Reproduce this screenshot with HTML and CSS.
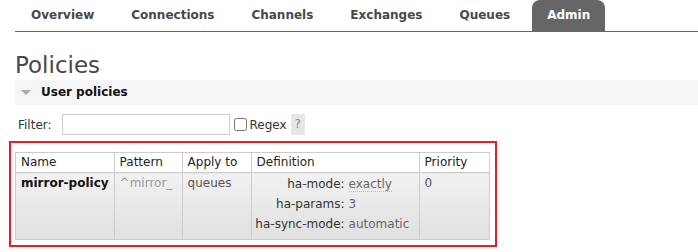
FILE: index.html
```html
<!DOCTYPE html>
<html lang="en">
<head>
    <meta charset="UTF-8">
    <title>Policies</title>
    <link rel="stylesheet" href="styles.css">
</head>
<body>
    <div class="page">
        <ul class="tabs">
            <li><a href="#">Overview</a></li>
            <li><a href="#">Connections</a></li>
            <li><a href="#">Channels</a></li>
            <li><a href="#">Exchanges</a></li>
            <li><a href="#">Queues</a></li>
            <li class="selected"><a href="#">Admin</a></li>
        </ul>

        <h1>Policies</h1>

        <div class="section">
            <h2><span class="arrow"></span>User policies</h2>
            <div class="filter">
                <label for="filter">Filter:</label>
                <input type="text" id="filter" class="filter-input">
                <input type="checkbox" id="regex" class="filter-check">
                <label for="regex">Regex</label>
                <span class="help">?</span>
            </div>
            <div class="highlight">
                <table class="list">
                    <thead>
                        <tr>
                            <th class="c-name">Name</th>
                            <th class="c-pattern">Pattern</th>
                            <th class="c-apply">Apply to</th>
                            <th class="c-def">Definition</th>
                            <th class="c-prio">Priority</th>
                        </tr>
                    </thead>
                    <tbody>
                        <tr>
                            <td class="name">mirror-policy</td>
                            <td class="pattern">^mirror_</td>
                            <td>queues</td>
                            <td class="definition">
                                <table class="facts">
                                    <tr><th>ha-mode:</th><td><abbr>exactly</abbr></td></tr>
                                    <tr><th>ha-params:</th><td>3</td></tr>
                                    <tr><th>ha-sync-mode:</th><td>automatic</td></tr>
                                </table>
                            </td>
                            <td>0</td>
                        </tr>
                    </tbody>
                </table>
            </div>
        </div>
    </div>
</body>
</html>
```

FILE: styles.css
```css
body {
    margin: 0;
    font-family: Verdana, "DejaVu Sans", sans-serif;
    font-size: 12px;
    color: #333;
    background-color: white;
}
.page {
    padding: 0 0 0 15px;
}
.tabs {
    list-style: none;
    margin: 0;
    padding: 0 0 0 1px;
    display: flex;
    border-bottom: 1px solid #666;
    height: 31px;
    align-items: stretch;
}
.tabs li {
    margin-right: 7px;
}
.tabs a {
    display: block;
    padding: 0 15px;
    line-height: 31px;
    color: #484848;
    font-weight: bold;
    text-decoration: none;
    border-radius: 8px 8px 0 0;
}
.tabs .selected a {
    background-color: #666;
    color: white;
}
h1 {
    margin: 0;
    padding-top: 19px;
    font-size: 23px;
    font-weight: normal;
    line-height: 28px;
    color: #484848;
}
h2 {
    margin: 1px 0 0 0;
    height: 25px;
    line-height: 25px;
    background-color: #f5f5f5;
    font-size: 12px;
    font-weight: bold;
    color: #111;
    display: flex;
    align-items: center;
}
.arrow {
    width: 0;
    height: 0;
    margin: 0 10px 0 6px;
    border-left: 5px solid transparent;
    border-right: 5px solid transparent;
    border-top: 5px solid #aaa;
}
.filter {
    display: flex;
    align-items: center;
    margin-top: 9px;
    height: 21px;
    padding-left: 3px;
}
.filter-input {
    width: 162px;
    height: 15px;
    margin: 0 4px 0 10px;
    padding: 2px;
    border: 1px solid #ccc;
    font-family: inherit;
    font-size: 12px;
}
.filter-check {
    width: 13px;
    height: 13px;
    margin: 0 3px 0 0;
}
.help {
    margin-left: 4px;
    width: 14px;
    height: 21px;
    line-height: 21px;
    text-align: center;
    background-color: #e6e6e6;
    color: #888;
}
.highlight {
    display: inline-block;
    margin: 6px 0 0 -6px;
    padding: 9px 5px 5px 4px;
    border: 2px solid #e0212a;
}
table.list {
    border-collapse: collapse;
    color: #222;
}
.list > thead > tr > th, .list > tbody > tr > td {
    border: 1px solid #ccc;
    text-align: left;
    vertical-align: top;
    line-height: 15px;
    white-space: nowrap;
}
.list > thead > tr > th {
    font-weight: normal;
    padding: 2px 5px;
    background-color: white;
}
.list > tbody > tr > td {
    padding: 3px 5px;
    color: #555;
    background: linear-gradient(#f1f1f1, #e0e0e0);
}
.c-name { width: 86px; }
.c-pattern { width: 57px; }
.c-apply { width: 58px; }
.c-def { width: 157px; }
.c-prio { width: 59px; }
.list td.name {
    font-weight: bold;
    color: #111;
}
.list td.pattern {
    color: #999;
}
.list > tbody > tr > td.definition {
    padding: 1px 5px 5px 3px;
}
.facts {
    border-collapse: collapse;
}
.facts th, .facts td {
    height: 20px;
    line-height: 15px;
    vertical-align: middle;
    white-space: nowrap;
}
.facts th {
    font-weight: normal;
    text-align: right;
    padding: 0 4px 0 0;
    width: 90px;
    color: #333;
}
.facts td {
    padding: 0;
    color: #666;
}
abbr {
    text-decoration: none;
    border-bottom: 1px dotted #bbb;
}
```
